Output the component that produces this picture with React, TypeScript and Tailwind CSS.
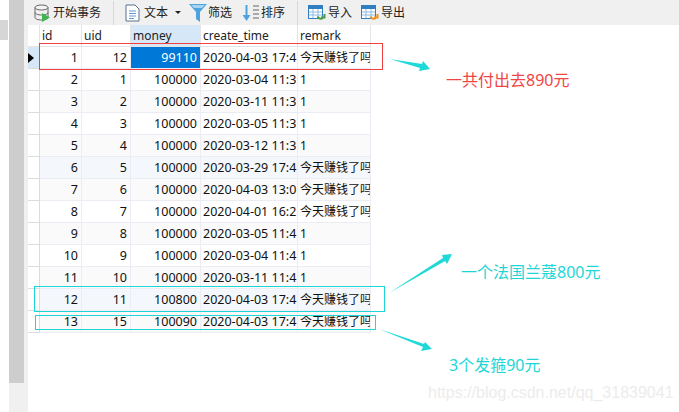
const FONT = "font-['Noto_Sans','Noto_Sans_CJK_SC',sans-serif]";

type Row = { id: number; uid: number; money: number; time: string; remark: string; tint?: boolean };

const LONG = "今天赚钱了吗";

const ROWS: Row[] = [
  { id: 1, uid: 12, money: 99110, time: "2020-04-03 17:4", remark: LONG },
  { id: 2, uid: 1, money: 100000, time: "2020-03-04 11:3", remark: "1" },
  { id: 3, uid: 2, money: 100000, time: "2020-03-11 11:3", remark: "1" },
  { id: 4, uid: 3, money: 100000, time: "2020-03-05 11:3", remark: "1" },
  { id: 5, uid: 4, money: 100000, time: "2020-03-12 11:3", remark: "1" },
  { id: 6, uid: 5, money: 100000, time: "2020-03-29 17:4", remark: LONG, tint: true },
  { id: 7, uid: 6, money: 100000, time: "2020-04-03 13:0", remark: LONG },
  { id: 8, uid: 7, money: 100000, time: "2020-04-01 16:2", remark: LONG },
  { id: 9, uid: 8, money: 100000, time: "2020-03-05 11:4", remark: "1" },
  { id: 10, uid: 9, money: 100000, time: "2020-03-04 11:4", remark: "1" },
  { id: 11, uid: 10, money: 100000, time: "2020-03-11 11:4", remark: "1" },
  { id: 12, uid: 11, money: 100800, time: "2020-04-03 17:4", remark: LONG, tint: true },
  { id: 13, uid: 15, money: 100090, time: "2020-04-03 17:4", remark: LONG },
];

function Sep() {
  return <div className="h-[24px] w-px bg-[#d8d8d8]" />;
}

function TableIcon({ accent }: { accent: string }) {
  return (
    <svg width="18" height="18" viewBox="0 0 18 18">
      <rect x="0.500" y="1.500" width="14" height="13" fill="#fff" stroke="#2f7fc1" />
      <rect x="0.500" y="1.500" width="14" height="3.500" fill="#2f7fc1" />
      <path d="M1 8h13M1 11h13M5 5v9M10 5v9" stroke="#8fbbe0" />
      <path d="M9.500 12.500c1.500 3 4.500 3 6 .5M16.500 10v3.500h-3.500" fill="none" stroke={accent} strokeWidth="2" />
    </svg>
  );
}

function Toolbar() {
  return (
    <div className="flex h-[25px] items-center bg-[#f0f0f0] text-[12px] text-[#222]">
      <div className="flex w-[85px] items-center gap-[2px] pl-[6px]">
        <svg width="17" height="18" viewBox="0 0 17 18">
          <ellipse cx="7.500" cy="3.500" rx="6.500" ry="2.500" fill="#f4f4f4" stroke="#666" />
          <path d="M1 3.500v10c0 1.400 2.900 2.500 6.500 2.500s6.500-1.100 6.500-2.500v-10M1 8.500c0 1.400 2.900 2.500 6.500 2.500s6.500-1.100 6.500-2.500" fill="none" stroke="#666" />
          <path d="M8 9l8 4.500-8 4.500z" fill="#3fb34f" />
        </svg>
        <span>开始事务</span>
      </div>
      <Sep />
      <div className="ml-[11px] flex items-center gap-[4px]">
        <svg width="15" height="18" viewBox="0 0 15 18">
          <path d="M1 1h9l4 4v12h-13z" fill="#fff" stroke="#59708a" />
          <path d="M4 7h7M4 9.500h7M4 12h7M4 14.500h5" stroke="#5b9bd5" />
        </svg>
        <span>文本</span>
      </div>
      <div className="ml-[7px] h-0 w-0 border-x-[3px] border-t-[3px] border-x-transparent border-t-[#222]" />
      <svg className="ml-[7px]" width="20" height="20" viewBox="0 0 20 20">
        <path d="M1 1h18l-7 8v10l-4-3V9z" fill="#4da3dd" />
        <path d="M3 2h14l-3 3H6z" fill="#a6d4f2" />
      </svg>
      <span>筛选</span>
      <svg className="ml-[9px]" width="20" height="20" viewBox="0 0 20 20">
        <path d="M5.500 2v14" stroke="#4da3dd" strokeWidth="2" />
        <path d="M1.500 12l4 6 4-6z" fill="#4da3dd" />
        <path d="M12 3h6M12 7h6M12 11h6M12 15h6" stroke="#666" />
      </svg>
      <span>排序</span>
      <div className="ml-[12px]">
        <Sep />
      </div>
      <div className="ml-[10px] flex items-center gap-[2px]">
        <TableIcon accent="#4a9b4a" />
        <span>导入</span>
      </div>
      <div className="ml-[9px] flex items-center gap-[2px]">
        <TableIcon accent="#f0921e" />
        <span>导出</span>
      </div>
    </div>
  );
}

function Head({ className, label }: { className: string; label?: string }) {
  return <div className={`border-r border-b border-[#e4e4e4] px-[2px] text-[12px] leading-[21px] text-[#222] ${className}`}>{label}</div>;
}

function DataRow({ row, first }: { row: Row; first: boolean }) {
  const cell = "h-[22px] overflow-hidden whitespace-nowrap border-r border-b border-[#ececf4] text-[12.500px] leading-[21px] text-[#111]";
  const bg = row.tint ? "bg-[#f4f8fd]" : row.id % 2 === 1 && !first ? "bg-[#fafafa]" : "bg-white";
  return (
    <div className={`flex ${bg}`}>
      <div className={`flex h-[22px] w-[12px] items-center border-r border-b border-[#dcdcdc] ${first ? "bg-[#d6e8f7]" : "bg-white"}`}>
        {first && <div className="h-0 w-0 border-y-[5px] border-l-[6px] border-y-transparent border-l-black" />}
      </div>
      <div className={`${cell} w-[42px] pr-[3px] text-right`}>{row.id}</div>
      <div className={`${cell} w-[49px] pr-[3px] text-right`}>{row.uid}</div>
      <div className={`${cell} w-[70px] pr-[3px] text-right ${first ? "bg-[#0078d7] text-white" : ""}`}>{row.money}</div>
      <div className={`${cell} w-[97px] pl-[2px]`}>{row.time}</div>
      <div className={`${cell} w-[73px] pl-[2px] text-[12px]`}>{row.remark}</div>
    </div>
  );
}

function Note({ className, text }: { className: string; text: string }) {
  return <div className={`absolute whitespace-nowrap text-[16px] leading-5 ${className}`}>{text}</div>;
}

export default function App() {
  return (
    <div className={`${FONT} relative flex h-[412px] w-[679px] overflow-hidden bg-white`}>
      <div className="w-[9px] pt-[20px]">
        <div className="h-[20px] w-[8px] bg-[#d6d6d6]" />
      </div>
      <div className="h-full w-[19px] bg-[#f0f0f0]">
        <div className="h-[383px] w-[15px] bg-[#cdcdcd]" />
      </div>
      <div className="flex-1">
        <Toolbar />
        <div className="w-[343px]">
          <div className="flex h-[22px]">
            <Head className="w-[12px] bg-white" />
            <Head className="w-[42px] bg-white" label="id" />
            <Head className="w-[49px] bg-white" label="uid" />
            <Head className="w-[70px] bg-[#d6e8f7]" label="money" />
            <Head className="w-[97px] bg-white" label="create_time" />
            <Head className="w-[73px] bg-white" label="remark" />
          </div>
          {ROWS.map((row, i) => (
            <DataRow key={row.id} row={row} first={i === 0} />
          ))}
        </div>
      </div>

      {/* hand-drawn annotations on top of the screenshot */}
      <div className="absolute left-[39px] top-[43px] h-[27px] w-[344px] border border-[#f04040]" />
      <div className="absolute left-[34px] top-[286px] h-[26px] w-[351px] border border-[#1fd6d6]" />
      <div className="absolute left-[35px] top-[315px] h-[15px] w-[341px] border border-[#1fd6d6]" />
      <svg className="absolute left-0 top-0" width="679" height="412" viewBox="0 0 679 412">
        <path d="M390 59L422 64L423 61L430 69L419 71L420 68Z" fill="#1fd9d9" />
        <path d="M389 293L445 261L447 264L452 254L442 255L443 258Z" fill="#1fd9d9" />
        <path d="M379 329L424 344L425 342L432 349L421 351L423 347Z" fill="#1fd9d9" />
      </svg>
      <Note className="left-[446px] top-[70px] text-[#f04545]" text="一共付出去890元" />
      <Note className="left-[461px] top-[262px] text-[#1fd6d6]" text="一个法国兰蔻800元" />
      <Note className="left-[449px] top-[355px] text-[#1fd6d6]" text="3个发箍90元" />
      <div className="absolute left-[428px] top-[383px] whitespace-nowrap font-['Liberation_Sans',sans-serif] text-[16px] leading-5 text-[#ececec]">
        https://blog.csdn.net/qq_31839041
      </div>
    </div>
  );
}
